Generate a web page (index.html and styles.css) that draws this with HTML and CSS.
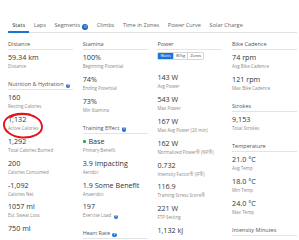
FILE: index.html
```html
<!DOCTYPE html>
<html lang="en">
<head>
    <meta charset="UTF-8">
    <meta name="viewport" content="width=device-width, initial-scale=1.0">
    <title>Activity Stats</title>
    <link rel="stylesheet" href="styles.css">
</head>
<body>
    <div class="page">
        <nav class="tabs">
            <a class="tab active">Stats</a>
            <a class="tab">Laps</a>
            <a class="tab">Segments <span class="badge">12</span></a>
            <a class="tab">Climbs</a>
            <a class="tab">Time in Zones</a>
            <a class="tab">Power Curve</a>
            <a class="tab">Solar Charge</a>
        </nav>

        <div class="stats-grid">
            <div class="column">
                <section class="group">
                    <h3 class="group-title">Distance</h3>
                    <div class="stat"><div class="stat-value">59.34 km</div><div class="stat-label">Distance</div></div>
                </section>
                <section class="group">
                    <h3 class="group-title">Nutrition &amp; Hydration <span class="help">?</span></h3>
                    <div class="stat"><div class="stat-value">160</div><div class="stat-label">Resting Calories</div></div>
                    <div class="stat"><div class="stat-value">1,132</div><div class="stat-label">Active Calories</div></div>
                    <div class="stat"><div class="stat-value">1,292</div><div class="stat-label">Total Calories Burned</div></div>
                    <div class="stat"><div class="stat-value">200</div><div class="stat-label">Calories Consumed</div></div>
                    <div class="stat"><div class="stat-value">-1,092</div><div class="stat-label">Calories Net</div></div>
                    <div class="stat"><div class="stat-value">1057 ml</div><div class="stat-label">Est. Sweat Loss</div></div>
                    <div class="stat"><div class="stat-value">750 ml</div></div>
                </section>
            </div>

            <div class="column">
                <section class="group">
                    <h3 class="group-title">Stamina</h3>
                    <div class="stat"><div class="stat-value">100%</div><div class="stat-label">Beginning Potential</div></div>
                    <div class="stat"><div class="stat-value">74%</div><div class="stat-label">Ending Potential</div></div>
                    <div class="stat"><div class="stat-value">73%</div><div class="stat-label">Min Stamina</div></div>
                </section>
                <section class="group">
                    <h3 class="group-title">Training Effect <span class="help">?</span></h3>
                    <div class="stat"><div class="stat-value"><span class="dot"></span>Base</div><div class="stat-label">Primary Benefit</div></div>
                    <div class="stat"><div class="stat-value">3.9 Impacting</div><div class="stat-label">Aerobic</div></div>
                    <div class="stat"><div class="stat-value">1.9 Some Benefit</div><div class="stat-label">Anaerobic</div></div>
                    <div class="stat"><div class="stat-value">197</div><div class="stat-label">Exercise Load <span class="help">?</span></div></div>
                </section>
                <section class="group">
                    <h3 class="group-title">Heart Rate <span class="help">?</span></h3>
                </section>
            </div>

            <div class="column">
                <section class="group">
                    <h3 class="group-title">Power</h3>
                    <div class="units">
                        <button class="unit selected">Watts</button>
                        <button class="unit">W/kg</button>
                        <button class="unit">Zones</button>
                    </div>
                    <div class="stat"><div class="stat-value">143 W</div><div class="stat-label">Avg Power</div></div>
                    <div class="stat"><div class="stat-value">543 W</div><div class="stat-label">Max Power</div></div>
                    <div class="stat"><div class="stat-value">167 W</div><div class="stat-label">Max Avg Power (20 min)</div></div>
                    <div class="stat"><div class="stat-value">162 W</div><div class="stat-label">Normalized Power® (NP®)</div></div>
                    <div class="stat"><div class="stat-value">0.732</div><div class="stat-label">Intensity Factor® (IF®)</div></div>
                    <div class="stat"><div class="stat-value">116.9</div><div class="stat-label">Training Stress Score®</div></div>
                    <div class="stat"><div class="stat-value">221 W</div><div class="stat-label">FTP Setting</div></div>
                    <div class="stat"><div class="stat-value">1,132 kJ</div></div>
                </section>
            </div>

            <div class="column">
                <section class="group">
                    <h3 class="group-title">Bike Cadence</h3>
                    <div class="stat"><div class="stat-value">74 rpm</div><div class="stat-label">Avg Bike Cadence</div></div>
                    <div class="stat"><div class="stat-value">121 rpm</div><div class="stat-label">Max Bike Cadence</div></div>
                </section>
                <section class="group">
                    <h3 class="group-title">Strokes</h3>
                    <div class="stat"><div class="stat-value">9,153</div><div class="stat-label">Total Strokes</div></div>
                </section>
                <section class="group">
                    <h3 class="group-title">Temperature</h3>
                    <div class="stat"><div class="stat-value">21.0 °C</div><div class="stat-label">Avg Temp</div></div>
                    <div class="stat"><div class="stat-value">18.0 °C</div><div class="stat-label">Min Temp</div></div>
                    <div class="stat"><div class="stat-value">24.0 °C</div><div class="stat-label">Max Temp</div></div>
                </section>
                <section class="group">
                    <h3 class="group-title">Intensity Minutes</h3>
                </section>
            </div>
        </div>

        <!-- hand-drawn highlight around Active Calories -->
        <svg class="scribble" width="299" height="240" viewBox="0 0 299 240">
            <path d="M30 114.5 C18 112 6 115 4 123 C3 131 12 137 22 137.5 C32 138 42 134 42 127 C42 119 33 114 22 114 C17 114 13 115.5 11 117"
                  fill="none" stroke="#e3131b" stroke-width="1.9" stroke-linecap="round"/>
        </svg>
    </div>
</body>
</html>
```

FILE: styles.css
```css
html, body {
    margin: 0;
    overflow: hidden;
}

body {
    background-color: #fff;
    font-family: "Open Sans", "DejaVu Sans", sans-serif;
    color: #333;
}

.page {
    position: relative;
    padding: 21px 0 0 8px;
}

.tabs {
    display: flex;
    width: 289px;
    border-bottom: 1px solid #e2e2e2;
}

.tab {
    padding: 0 4.3px 1px;
    font-size: 5.6px;
    line-height: 8px;
    color: #666;
    white-space: nowrap;
    border-bottom: 2px solid transparent;
    margin-bottom: -1px;
}

.tab.active {
    color: #333;
    border-bottom-color: #1976d2;
}

.badge {
    display: inline-block;
    width: 6px;
    height: 6px;
    margin-left: 0.5px;
    border-radius: 50%;
    background-color: #1565c0;
    color: #fff;
    font-size: 3.2px;
    line-height: 6px;
    text-align: center;
    vertical-align: -1px;
}

.stats-grid {
    display: grid;
    grid-template-columns: repeat(4, 65px);
    column-gap: 9.7px;
    margin-top: 7px;
}

.group {
    margin-bottom: 10px;
}

.group-title {
    margin: 0 0 2px;
    padding-bottom: 1px;
    font-size: 5.5px;
    line-height: 8px;
    font-weight: 400;
    color: #555;
    border-bottom: 1px solid #e4e4e4;
    white-space: nowrap;
}

.help {
    display: inline-block;
    width: 4.4px;
    height: 4.4px;
    margin-left: 1px;
    border-radius: 50%;
    background-color: #1a6fcf;
    color: #fff;
    font-size: 3.4px;
    line-height: 4.4px;
    font-weight: 700;
    text-align: center;
    vertical-align: -0.5px;
}

.stat {
    margin-bottom: 3.9px;
}

.stat-value {
    font-size: 7.2px;
    line-height: 10px;
    color: #333;
    white-space: nowrap;
}

.stat-label {
    font-size: 4.5px;
    line-height: 8px;
    color: #8a8a8a;
    white-space: nowrap;
}

.dot {
    display: inline-block;
    width: 2.6px;
    height: 2.6px;
    margin: 0 2.6px 0 0.6px;
    border-radius: 50%;
    background-color: #22a35a;
    vertical-align: 1px;
}

.units {
    display: flex;
    width: fit-content;
    height: 8px;
    margin: 2px 0 12px;
    border: 1px solid #d6d6d6;
    border-radius: 1.5px;
    box-sizing: border-box;
    overflow: hidden;
}

.unit {
    padding: 0 2.2px;
    border: none;
    border-left: 1px solid #d6d6d6;
    background-color: #fff;
    font-family: inherit;
    font-size: 3.8px;
    line-height: 6px;
    color: #444;
}

.unit:first-child {
    border-left: none;
}

.unit.selected {
    background-color: #1a73d9;
    color: #fff;
}

.scribble {
    position: absolute;
    left: 0;
    top: 0;
    pointer-events: none;
}
```
